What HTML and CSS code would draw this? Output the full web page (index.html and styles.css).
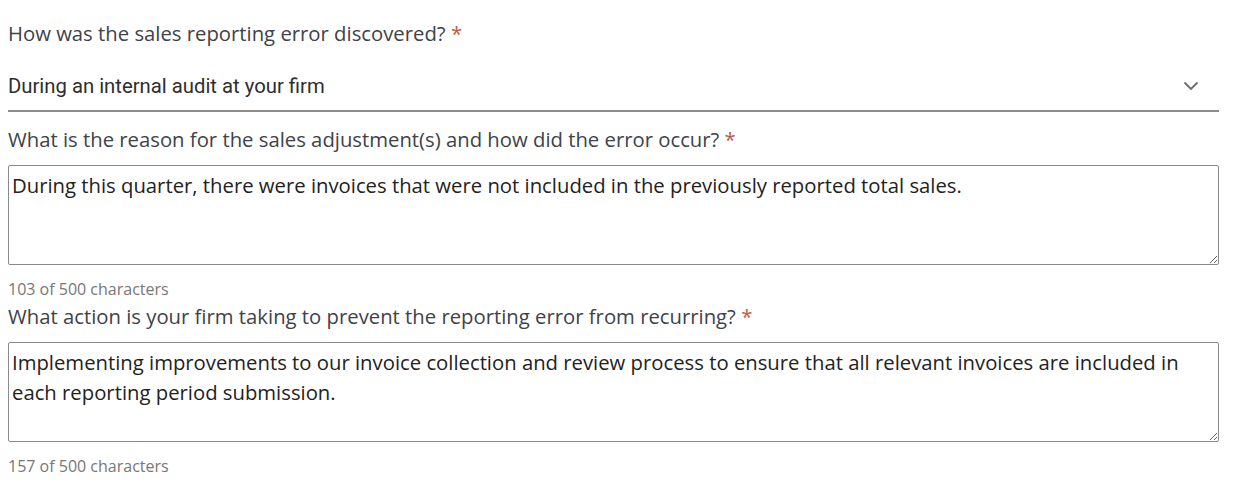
FILE: index.html
```html
<!DOCTYPE html>
<html lang="en">
<head>
<meta charset="utf-8">
<link rel="stylesheet" href="styles.css">
</head>
<body>
<form class="form">
  <div class="field">
    <label class="label">How was the sales reporting error discovered? <span class="req">*</span></label>
    <div class="select">
      <span class="select-value">During an internal audit at your firm</span>
      <svg class="chevron" width="16" height="10" viewBox="0 0 16 10"><path d="M1.5 1.5 L8 8 L14.5 1.5" fill="none" stroke="#6b6b6b" stroke-width="1.8"/></svg>
    </div>
  </div>
  <div class="field">
    <label class="label">What is the reason for the sales adjustment(s) and how did the error occur? <span class="req">*</span></label>
    <textarea class="area">During this quarter, there were invoices that were not included in the previously reported total sales.</textarea>
    <div class="count">103 of 500 characters</div>
  </div>
  <div class="field">
    <label class="label">What action is your firm taking to prevent the reporting error from recurring? <span class="req">*</span></label>
    <textarea class="area">Implementing improvements to our invoice collection and review process to ensure that all relevant invoices are included in each reporting period submission.</textarea>
    <div class="count">157 of 500 characters</div>
  </div>
</form>
</body>
</html>
```
FILE: styles.css
```css
html, body {
  margin: 0;
  padding: 0;
  background: #ffffff;
}
body {
  font-family: "Open Sans", "Noto Sans", sans-serif;
  color: #333;
}
.form {
  width: 1211px;
  padding: 19px 0 0 8px;
  display: flex;
  flex-direction: column;
}
.field {
  display: flex;
  flex-direction: column;
}
.label {
  font-size: 20.3px;
  line-height: 28px;
  color: #3e4249;
}
.req {
  color: #c0573f;
}
.select {
  display: flex;
  align-items: center;
  justify-content: space-between;
  padding: 25px 0 10px 0;
  border-bottom: 2px solid #8c8c8c;
}
.select-value {
  font-family: Roboto, "Liberation Sans", sans-serif;
  font-size: 20.3px;
  line-height: 28px;
  color: #2e2e2e;
}
.chevron {
  margin-right: 20px;
}
.field + .field .label {
  margin-top: 13px;
}
.area {
  display: block;
  width: 1211px;
  height: 100px;
  box-sizing: border-box;
  margin: 12px 0 0 0;
  padding: 4px 3px 3px 3px;
  border: 1px solid #8a8a8a;
  border-radius: 2px;
  font-family: "Open Sans", "Noto Sans", sans-serif;
  font-size: 20.3px;
  line-height: 30px;
  color: #222;
  resize: vertical;
  outline: none;
}
.count {
  font-size: 16px;
  line-height: 20px;
  color: #777;
  margin-top: 14px;
}
.field + .field + .field .label {
  margin-top: 3px;
}
```
